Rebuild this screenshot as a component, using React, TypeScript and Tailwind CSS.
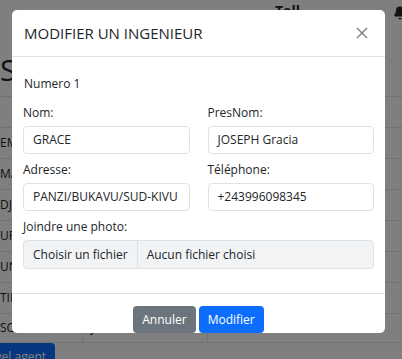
import { Bell } from "lucide-react";

const rows = ["EMMANUEL", "MATABARO", "DJUMA", "URBAIN", "UNENGE", "TIMOTHEE", "SOSTHENE"];

function Field({ label, value }: { label: string; value: string }) {
  return (
    <div>
      <label className="mb-[4px] block leading-[18px]">{label}</label>
      <div className="flex h-[28px] items-center rounded-[4px] border border-[#dee2e6] pl-[9px] text-[#212529]">
        {value}
      </div>
    </div>
  );
}

export default function App() {
  return (
    <div
      className="relative h-[359px] w-[402px] overflow-hidden bg-white text-[12px] text-[#212529]"
      style={{ fontFamily: '"Open Sans", "Noto Sans", sans-serif' }}
    >
      {/* Page derrière le modal */}
      <div className="flex h-[52px] items-start pl-[275px] pt-[1px]">
        <span className="text-[14px] font-bold leading-[20px]">Tell</span>
        <Bell size={14} fill="currentColor" className="ml-auto mr-[-5px] mt-[5px]" />
      </div>
      <h2 className="mb-[8px] text-[30px] font-medium leading-[36px]">Stagiaires</h2>

      <div className="border-b border-[#dee2e6]">
        <div className="flex h-[31px] items-center border-t border-[#dee2e6] font-bold">
          <div className="w-[83px] pl-[14px]">Nom</div>
          <div className="w-[125px] pl-[8px]">Postnom</div>
          <div className="pl-[8px]">Adresse</div>
        </div>
        {rows.map((r, i) => (
          <div
            key={r}
            className={`flex items-stretch border-t border-[#dee2e6] ${i === rows.length - 1 ? "h-[29px]" : "h-[31px]"}`}
          >
            <div className="flex w-[83px] items-center border-r border-[#dee2e6]">{r}</div>
            <div className="flex w-[125px] items-center border-r border-[#dee2e6] pl-[8px]">JOSEPH</div>
            <div className="flex items-center pl-[8px]">BUKAVU</div>
          </div>
        ))}
      </div>
      <button className="ml-[-37px] rounded-[4px] bg-[#0d6efd] px-[9px] py-[5px] leading-[18px] text-white">
        Nouvel agent
      </button>

      {/* Fond assombri */}
      <div className="absolute inset-0 bg-black/50" />

      {/* Modal */}
      <div className="absolute left-[12px] top-[10px] w-[373px] overflow-hidden rounded-[5px] bg-white">
        <div className="flex items-center justify-between border-b border-[#dee2e6] px-[12px] py-[12px]">
          <h5 className="text-[15px] font-medium leading-[22px] text-[#212529]">MODIFIER UN INGENIEUR</h5>
          <svg width="12" height="12" viewBox="0 0 12 12" className="mr-[5px]">
            <path d="M1 1L11 11M11 1L1 11" stroke="#7a7a7a" strokeWidth="1.3" />
          </svg>
        </div>

        <div className="px-[11px] pb-[24px] pt-[18px]">
          <p className="mb-[11px] pl-[1px] leading-[18px]">Numero 1</p>
          <div className="grid grid-cols-2 gap-x-[18px] gap-y-[7px]">
            <Field label="Nom:" value="GRACE" />
            <Field label="PresNom:" value="JOSEPH Gracia" />
            <Field label="Adresse:" value="PANZI/BUKAVU/SUD-KIVU" />
            <Field label="Téléphone:" value="+243996098345" />
          </div>
          <label className="mb-[4px] mt-[7px] block leading-[18px]">Joindre une photo:</label>
          <div className="flex h-[29px] items-stretch rounded-[4px] border border-[#dee2e6] bg-[#f1f3f5]">
            <span className="flex items-center border-r border-[#dee2e6] px-[9px]">Choisir un fichier</span>
            <span className="flex items-center pl-[9px]">Aucun fichier choisi</span>
          </div>
        </div>

        <div className="flex justify-center gap-[3px] border-t border-[#dee2e6] pt-[12px]">
          <button className="h-[27px] rounded-[4px] bg-[#6c757d] px-[9px] text-white">Annuler</button>
          <button className="h-[27px] rounded-[4px] bg-[#0d6efd] px-[9px] text-white">Modifier</button>
        </div>
      </div>
    </div>
  );
}
